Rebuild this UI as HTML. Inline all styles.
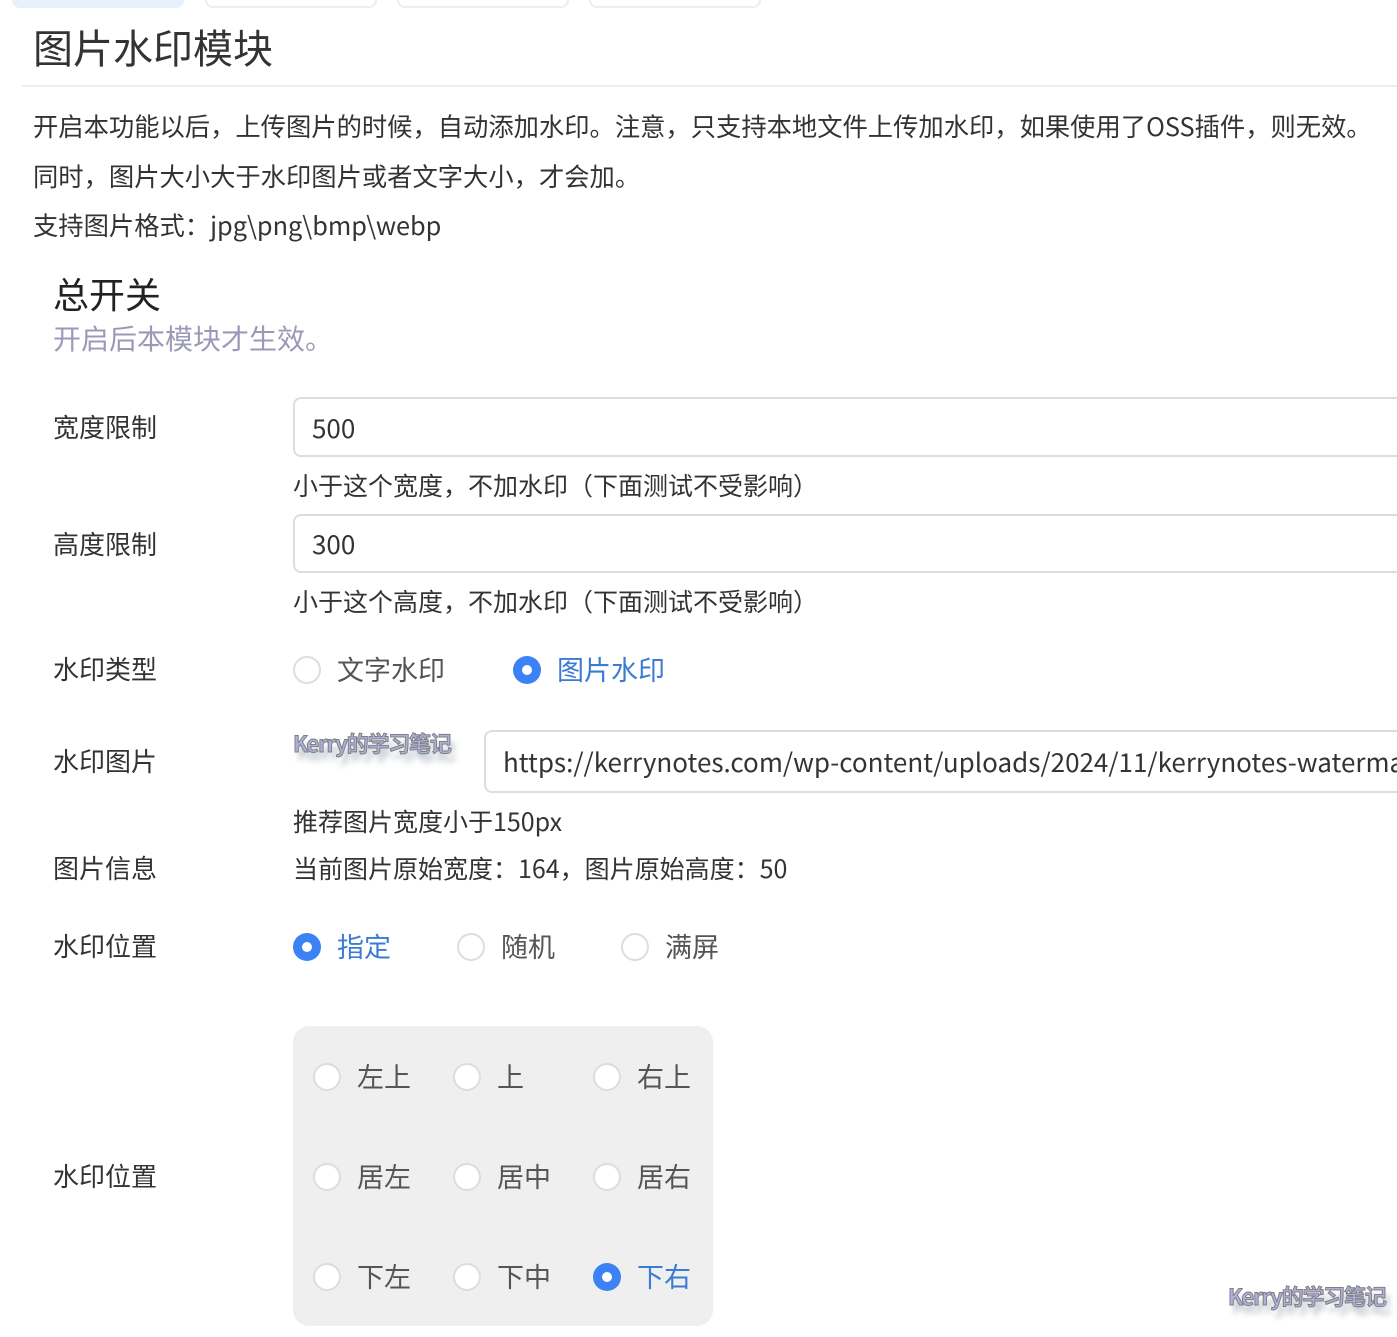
<!DOCTYPE html>
<html><head><meta charset="utf-8"><style>
*{margin:0;padding:0;box-sizing:border-box}
body{width:1397px;height:1337px;overflow:hidden;background:#fff;font-family:"Noto Sans CJK SC","Liberation Sans",sans-serif;color:#333;position:relative}
.a{position:absolute;white-space:nowrap}
.tab{position:absolute;top:-14px;height:22px;border:2px solid #eee;border-radius:8px;background:#fff}
.lbl{position:absolute;left:53px;font-size:26px;color:#333;line-height:30px;white-space:nowrap}
.inp{position:absolute;border:2px solid #ddd;border-radius:8px;background:#fff;font-size:26px;color:#333;padding-left:17px;display:flex;align-items:center;right:-20px;white-space:nowrap;overflow:hidden}
.help{position:absolute;left:293px;font-size:25px;color:#333;line-height:30px;white-space:nowrap}
.r{position:absolute;width:28px;height:28px;border-radius:50%;border:2px solid #ddd;background:#fff}
.r.on{border:none;background:#3a82f6}
.r.on::after{content:"";position:absolute;left:9px;top:9px;width:10px;height:10px;border-radius:50%;background:#fff}
.rt{position:absolute;font-size:27px;color:#555;line-height:30px;white-space:nowrap}
.rt.on{color:#3a7bd5}
.wm{position:absolute;white-space:nowrap;font-weight:bold;font-size:22px;line-height:26px;color:#b0b0e0;-webkit-text-stroke:1px #808080;text-shadow:4px 8px 6px rgba(60,90,110,.35);letter-spacing:-1.2px;font-family:"Noto Sans CJK SC",sans-serif}
</style></head><body>
<div class="tab" style="left:12px;width:172px;background:#e8f1fb;border-color:#e8f1fb"></div>
<div class="tab" style="left:205px;width:172px"></div>
<div class="tab" style="left:397px;width:172px"></div>
<div class="tab" style="left:589px;width:172px"></div>
<div class="a" style="left:33px;top:22px;font-size:40px;color:#333;line-height:48px">图片水印模块</div>
<div class="a" style="left:22px;top:85px;width:1400px;height:2px;background:#eee"></div>
<div class="a" style="left:33px;top:110px;font-size:25.3px;line-height:32px;color:#333">开启本功能以后，上传图片的时候，自动添加水印。注意，只支持本地文件上传加水印，如果使用了OSS插件，则无效。</div>
<div class="a" style="left:33px;top:160px;font-size:25.3px;line-height:32px;color:#333">同时，图片大小大于水印图片或者文字大小，才会加。</div>
<div class="a" style="left:33px;top:209px;font-size:25.3px;line-height:32px;color:#333">支持图片格式：jpg\png\bmp\webp</div>
<div class="a" style="left:53px;top:271px;font-size:36px;line-height:44px;color:#222">总开关</div>
<div class="a" style="left:53px;top:320px;font-size:28px;line-height:36px;color:#9a9ab8">开启后本模块才生效。</div>

<div class="lbl" style="top:412px">宽度限制</div>
<div class="inp" style="left:293px;top:397px;height:60px">500</div>
<div class="help" style="top:470px">小于这个宽度，不加水印（下面测试不受影响）</div>
<div class="lbl" style="top:529px">高度限制</div>
<div class="inp" style="left:293px;top:514px;height:59px">300</div>
<div class="help" style="top:586px">小于这个高度，不加水印（下面测试不受影响）</div>

<div class="lbl" style="top:654px">水印类型</div>
<div class="r" style="left:293px;top:656px"></div><div class="rt" style="left:337px;top:654px">文字水印</div>
<div class="r on" style="left:513px;top:656px"></div><div class="rt on" style="left:557px;top:654px">图片水印</div>

<div class="lbl" style="top:746px">水印图片</div>
<div class="wm" style="left:293px;top:730px">Kerry的学习笔记</div>
<div class="inp" style="left:484px;top:730px;height:63px;font-size:26px">https://kerrynotes.com/wp-content/uploads/2024/11/kerrynotes-watermark.png</div>
<div class="help" style="top:806px">推荐图片宽度小于150px</div>
<div class="lbl" style="top:853px">图片信息</div>
<div class="help" style="top:853px">当前图片原始宽度：164，图片原始高度：50</div>

<div class="lbl" style="top:931px">水印位置</div>
<div class="r on" style="left:293px;top:933px"></div><div class="rt on" style="left:337px;top:931px">指定</div>
<div class="r" style="left:457px;top:933px"></div><div class="rt" style="left:501px;top:931px">随机</div>
<div class="r" style="left:621px;top:933px"></div><div class="rt" style="left:665px;top:931px">满屏</div>

<div class="lbl" style="top:1161px">水印位置</div>
<div class="a" style="left:293px;top:1026px;width:420px;height:300px;background:#efefef;border-radius:16px"></div>
<div class="r" style="left:313px;top:1063px"></div><div class="rt" style="left:357px;top:1061px">左上</div>
<div class="r" style="left:453px;top:1063px"></div><div class="rt" style="left:497px;top:1061px">上</div>
<div class="r" style="left:593px;top:1063px"></div><div class="rt" style="left:637px;top:1061px">右上</div>
<div class="r" style="left:313px;top:1163px"></div><div class="rt" style="left:357px;top:1161px">居左</div>
<div class="r" style="left:453px;top:1163px"></div><div class="rt" style="left:497px;top:1161px">居中</div>
<div class="r" style="left:593px;top:1163px"></div><div class="rt" style="left:637px;top:1161px">居右</div>
<div class="r" style="left:313px;top:1263px"></div><div class="rt" style="left:357px;top:1261px">下左</div>
<div class="r" style="left:453px;top:1263px"></div><div class="rt" style="left:497px;top:1261px">下中</div>
<div class="r on" style="left:593px;top:1263px"></div><div class="rt on" style="left:637px;top:1261px">下右</div>

<div class="wm" style="left:1228px;top:1283px">Kerry的学习笔记</div>
</body></html>
